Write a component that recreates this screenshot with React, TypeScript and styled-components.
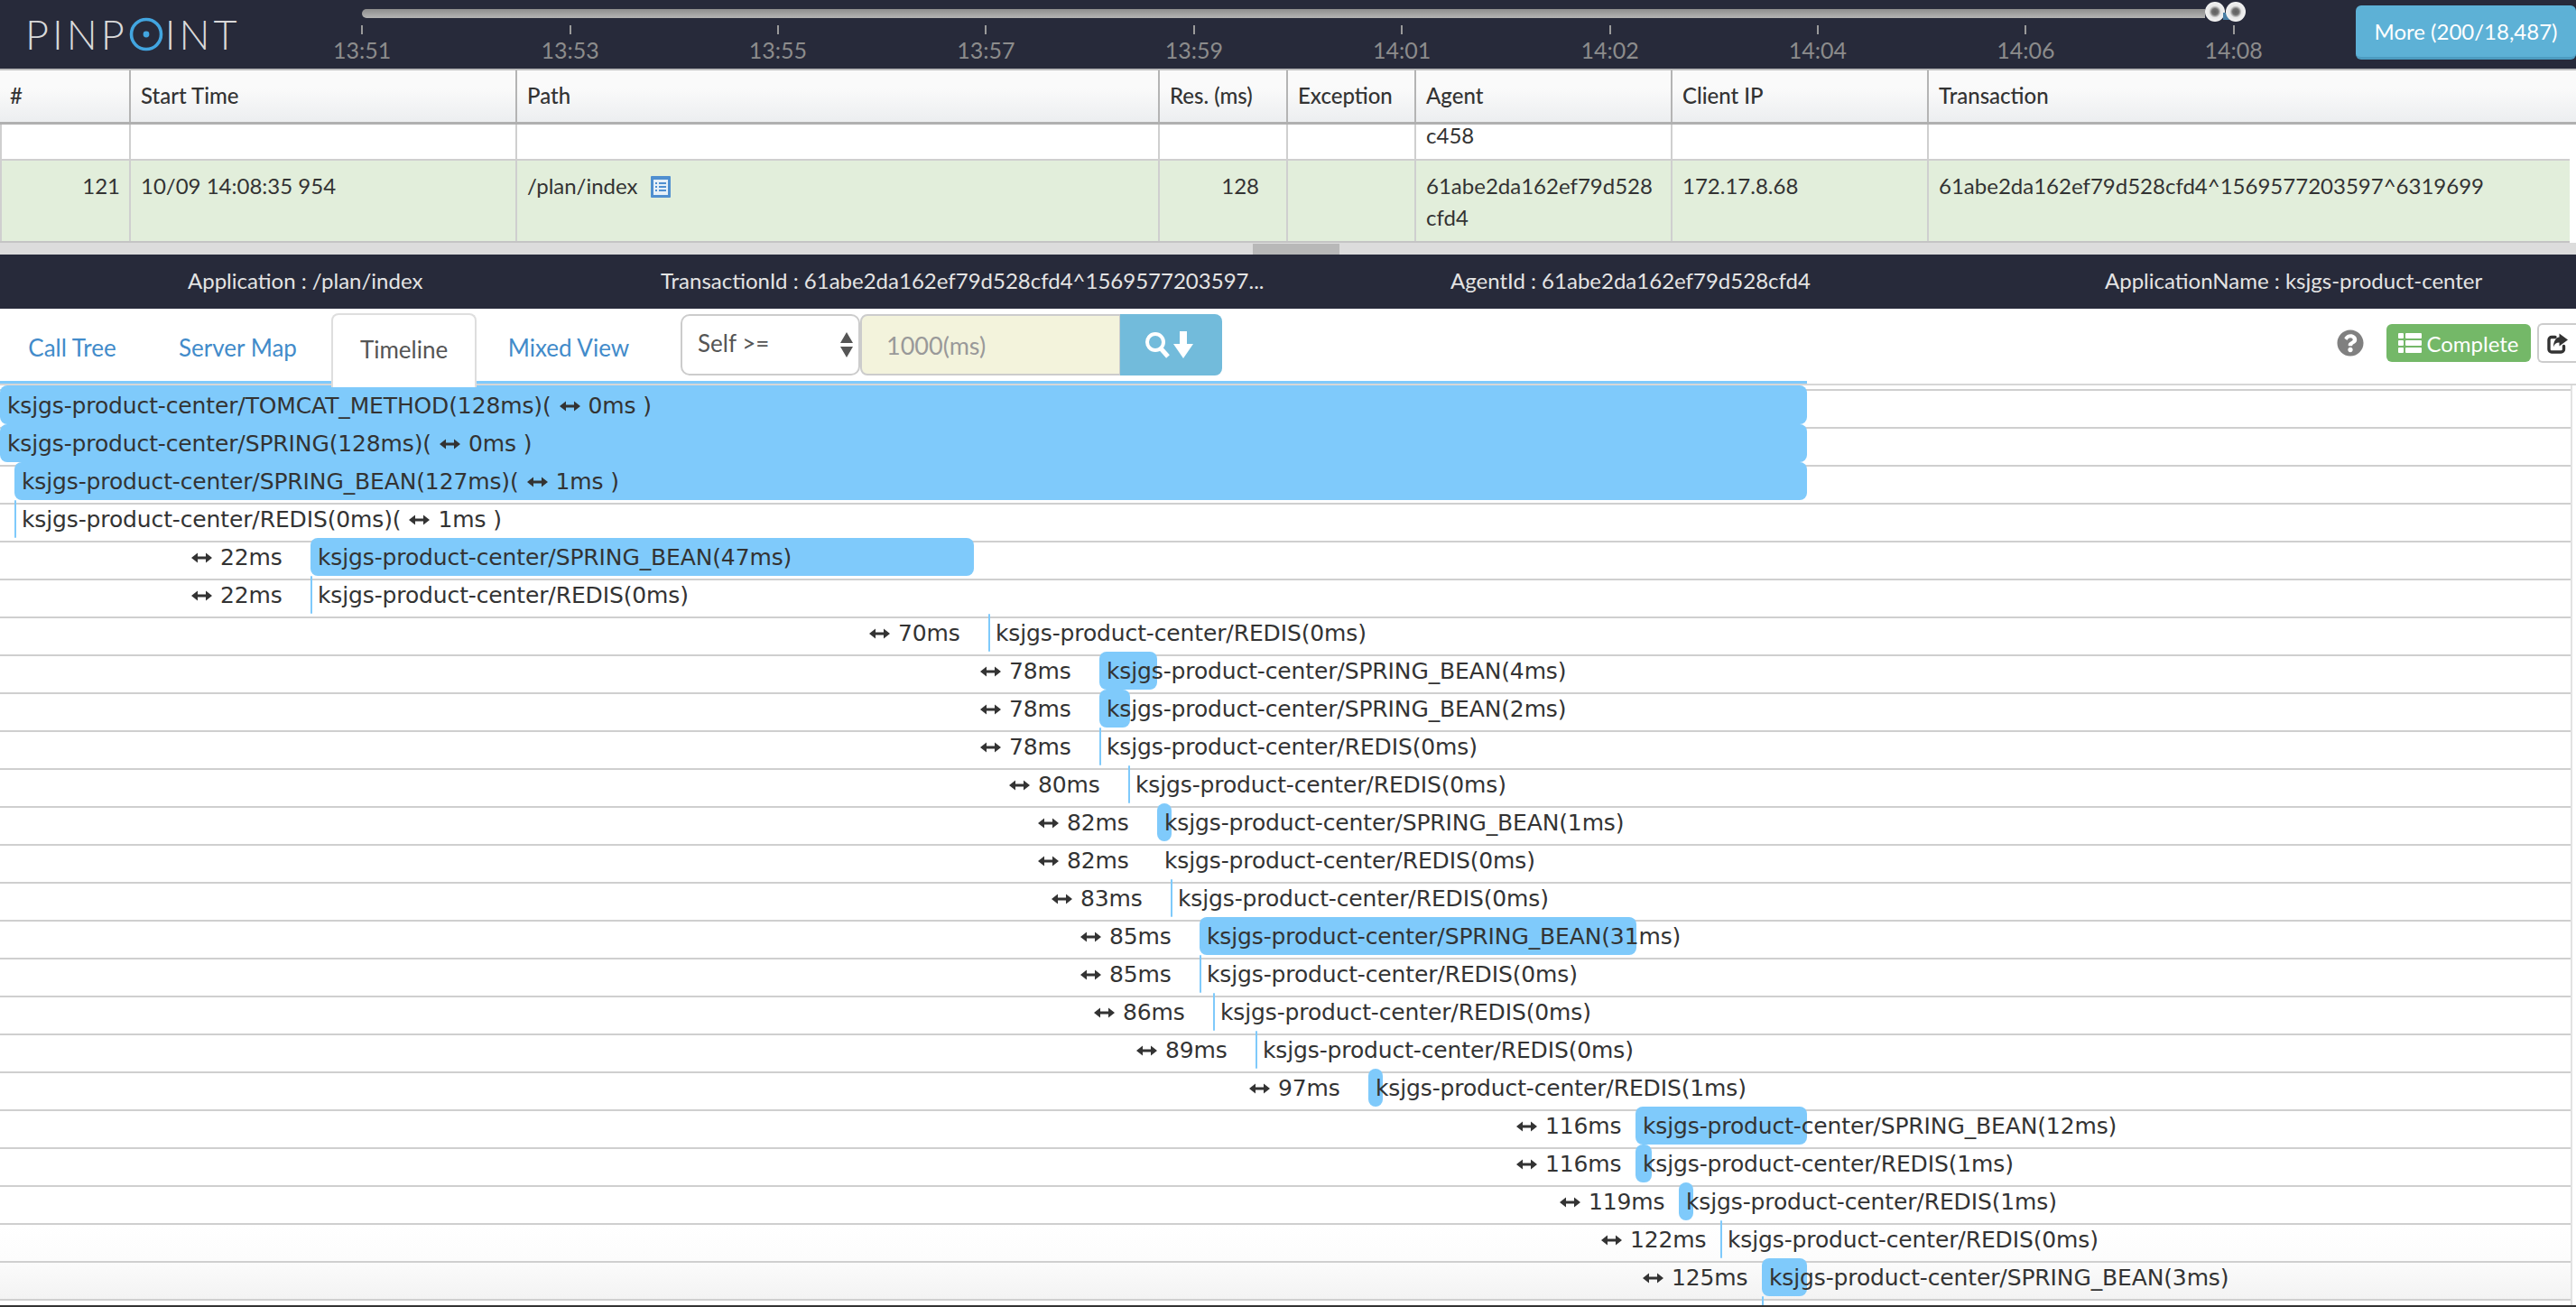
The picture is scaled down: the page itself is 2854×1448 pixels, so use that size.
import React from "react";
import styled, { createGlobalStyle } from "styled-components";
import { FaQuestionCircle } from "react-icons/fa";

const GlobalStyle = createGlobalStyle`
  html, body { margin: 0; padding: 0; background: #fff; }
  * { box-sizing: border-box; }
`;

const DARK = "#272a3a";
const BLUE = "#7fcafb";
const LINE = "#cfcfcf";

const Page = styled.div`
  width: 2854px;
  height: 1448px;
  overflow: hidden;
  display: flex;
  flex-direction: column;
  font-family: Lato, "Liberation Sans", sans-serif;
  color: #333;
`;

const TopBar = styled.header`
  height: 78px;
  flex: none;
  display: flex;
  background: ${DARK};
  border-bottom: 2px solid #bcbcbc;
`;

const Logo = styled.div`
  width: 286px;
  flex: none;
  height: 76px;
  padding-left: 28px;
  display: flex;
  align-items: center;
  font-size: 45px;
  font-weight: 300;
  color: #d9d9d9;
  letter-spacing: 4px;
  line-height: 1;
`;

const LogoDot = styled.svg`
  width: 38px;
  height: 38px;
  margin: 0 2px 0 1px;
  flex: none;
`;

const Axis = styled.div`
  width: 2324px;
  flex: none;
  padding-top: 10px;
`;

const Track = styled.div`
  position: relative;
  width: 2042px;
  height: 10px;
  margin-left: 115px;
  border-radius: 5px 0 0 5px;
  background: linear-gradient(#8d8d8d, #b4b4b4);
`;

const Handle = styled.span<{ $x: number }>`
  position: absolute;
  left: ${(p) => p.$x}px;
  top: -8px;
  width: 22px;
  height: 22px;
  border-radius: 50%;
  background: radial-gradient(circle, #5e5e5e 0, #6e6e6e 22%, #e6e6e6 42%, #f2f2f2 68%, rgba(190, 190, 190, 0.75) 100%);
`;

const HandleGap = styled.span`
  position: absolute;
  left: 2062px;
  top: 4px;
  width: 14px;
  height: 8px;
  background: #4a7fa5;
`;

const Ticks = styled.div`
  display: flex;
  margin-top: 8px;
`;

const Tick = styled.div`
  width: 230.4px;
  flex: none;
  display: flex;
  flex-direction: column;
  align-items: center;
  font-size: 25px;
  line-height: 30px;
  color: #8c8c8c;

  &::before {
    content: "";
    width: 2px;
    height: 10px;
    margin-bottom: 2px;
    background: #9a9a9a;
  }
`;

const MoreButton = styled.div`
  margin: 6px 0 0 auto;
  width: 244px;
  height: 60px;
  display: flex;
  align-items: center;
  justify-content: center;
  background: #5db1d6;
  border-bottom: 3px solid #4d9cc1;
  border-radius: 6px;
  color: #fff;
  font-size: 24px;
`;

const COLUMNS = "145px 428px 712px 142px 142px 284px 284px 1fr";

const TableHead = styled.div`
  height: 60px;
  flex: none;
  display: grid;
  grid-template-columns: ${COLUMNS};
  background: linear-gradient(#fafafa 35%, #eceef0);
  border-bottom: 3px solid #b0b0b0;
`;

const HeadCell = styled.div`
  display: flex;
  align-items: center;
  padding: 0 0 2px 11px;
  font-size: 24px;
  font-weight: 500;
  color: #333;
  border-right: 2px solid #b4b4b4;

  &:last-child {
    border-right: 0;
  }
`;

const TableRow = styled.div<{ $selected?: boolean; $height: number }>`
  height: ${(p) => p.$height}px;
  width: 2847px;
  flex: none;
  display: grid;
  grid-template-columns: ${COLUMNS};
  background: ${(p) => (p.$selected ? "#e2eedb" : "#fff")};
  border-bottom: 2px solid ${(p) => (p.$selected ? "#c4c4c4" : LINE)};
`;

const Cell = styled.div<{ $right?: number }>`
  padding: 10px ${(p) => p.$right ?? 8}px 0 11px;
  font-family: Lato, "Liberation Sans", Arial, sans-serif;
  font-size: 24px;
  line-height: 35px;
  color: #333;
  text-align: ${(p) => (p.$right ? "right" : "left")};
  border-right: 2px solid ${LINE};

  &:first-child {
    border-left: 2px solid ${LINE};
  }
  &:last-child {
    border-right: 0;
  }
`;

const TopCell = styled(Cell)`
  padding-top: 0;
  line-height: 24px;
`;

const PathIcon = styled.svg`
  width: 22px;
  height: 24px;
  margin-left: 14px;
  vertical-align: -4px;
`;

const ScrollTrack = styled.div`
  height: 13px;
  flex: none;
  background: #dcdcdc;
  display: flex;
  align-items: flex-end;
`;

const ScrollThumb = styled.div`
  width: 96px;
  height: 12px;
  margin-left: 1388px;
  background: #b8b8b8;
`;

const InfoBar = styled.div`
  height: 60px;
  flex: none;
  display: grid;
  grid-template-columns: 524px 875px 725px 1fr;
  align-items: center;
  padding: 0 0 4px 208px;
  background: ${DARK};
  color: #e4e4e4;
  font-size: 24px;
`;

const TabStrip = styled.div`
  position: relative;
  height: 85px;
  flex: none;
  display: flex;
  align-items: flex-start;
  border-bottom: 2px solid #d6d6d6;
`;

const TopEdge = styled.div`
  position: absolute;
  left: 0;
  bottom: 0;
  width: 2002px;
  height: 3px;
  background: ${BLUE};
`;

const Tab = styled.div<{ $active?: boolean; $width: number }>`
  position: relative;
  z-index: 1;
  width: ${(p) => p.$width}px;
  height: 80px;
  margin-top: 5px;
  display: flex;
  align-items: center;
  justify-content: center;
  padding-bottom: 4px;
  font-size: 26px;
  color: ${(p) => (p.$active ? "#555" : "#428bca")};
  background: #fff;
  ${(p) =>
    p.$active
      ? `border: 2px solid #dedede; border-bottom: 0; border-radius: 8px 8px 0 0; height: 82px;`
      : `background: transparent;`}
`;

const FilterGroup = styled.div`
  display: flex;
  margin: 6px 0 0 22px;
  height: 68px;
`;

const SelectBox = styled.div`
  width: 199px;
  display: flex;
  align-items: center;
  justify-content: space-between;
  padding: 0 6px 4px 17px;
  background: #fff;
  border: 2px solid #ccc;
  border-radius: 10px;
  font-size: 26px;
  color: #555;
`;

const SelectArrows = styled.svg`
  width: 14px;
  height: 28px;
  margin-top: 4px;
`;

const FilterInput = styled.div`
  width: 288px;
  display: flex;
  align-items: center;
  padding: 0 0 0 27px;
  background: #f3f3dc;
  border: 2px solid #ccc;
  border-right-width: 1px;
  border-radius: 8px 0 0 8px;
  font-size: 27px;
  color: #999;
`;

const SearchButton = styled.div`
  width: 113px;
  display: flex;
  align-items: center;
  justify-content: center;
  gap: 4px;
  padding-right: 6px;
  background: #72bbdb;
  border-radius: 0 8px 8px 0;
`;

const RightTools = styled.div`
  margin-left: auto;
  height: 44px;
  margin-top: 16px;
  display: flex;
  align-items: center;
`;

const HelpIcon = styled(FaQuestionCircle)`
  width: 30px;
  height: 30px;
  color: #808080;
  margin-right: 25px;
`;

const CompleteBadge = styled.div`
  width: 160px;
  height: 42px;
  display: flex;
  align-items: center;
  justify-content: center;
  gap: 5px;
  border-radius: 6px;
  background: #74b868;
  color: #fff;
  font-size: 24px;
`;

const ShareButton = styled.div`
  width: 43px;
  height: 44px;
  margin-left: 7px;
  padding-left: 9px;
  display: flex;
  align-items: center;
  background: #fff;
  border: 2px solid #ccc;
  border-right: 0;
  border-radius: 6px 0 0 6px;
`;

const Lanes = styled.div`
  position: relative;
  flex: 1;
  width: 2850px;
  padding-top: 4px;
  overflow: hidden;
  border-right: 2px solid #e2e2e2;
`;

const Bar = styled.div`
  position: absolute;
  top: -5px;
  height: 42px;
  border-radius: 8px;
  background: ${BLUE};
`;

const Lane = styled.div`
  position: relative;
  height: 42px;
  display: flex;
  align-items: center;
  padding-bottom: 8px;
  border-top: 2px solid ${LINE};
  font-family: "DejaVu Sans", sans-serif;
  font-size: 25px;
  letter-spacing: -0.13px;
  white-space: nowrap;
  color: #333;

  &:first-child ${Bar} {
    top: -6px;
    height: 43px;
  }
  &:nth-last-child(2) {
    background: linear-gradient(#fbfbfb, #f3f3f3);
  }
  &:nth-last-child(3) {
    background: linear-gradient(#fff, #fcfcfc);
  }
`;

const Lead = styled.div`
  flex: none;
  display: flex;
  justify-content: flex-end;
  position: relative;
`;

const GapRow = styled.div`
  width: 132px;
  flex: none;
  display: flex;
  align-items: center;
  gap: 9px;
  position: relative;
`;

const Label = styled.span`
  position: relative;
  margin-left: 8px;
  display: inline-flex;
  align-items: center;
`;

const Arrow = styled.svg`
  width: 23px;
  height: 12px;
  flex: none;
  margin-top: 2px;
`;

const InlineArrow = styled(Arrow)`
  margin: 2px 9px 0 9px;
`;

const BottomEdge = styled.div`
  height: 2px;
  flex: none;
  background: #333;
`;

const LongArrow = ({ inline }: { inline?: boolean }) => {
  const Comp = inline ? InlineArrow : Arrow;
  return (
    <Comp viewBox="0 0 23 12">
      <path d="M0 6 L7 0.5 V4.5 H16 V0.5 L23 6 L16 11.5 V7.5 H7 V11.5 Z" fill="#333" />
    </Comp>
  );
};

const ListIcon = () => (
  <svg width="26" height="24" viewBox="0 0 26 24" fill="#fff">
    <rect x="0" y="1" width="6" height="6" rx="1" />
    <rect x="8" y="1" width="18" height="6" rx="1" />
    <rect x="0" y="9" width="6" height="6" rx="1" />
    <rect x="8" y="9" width="18" height="6" rx="1" />
    <rect x="0" y="17" width="6" height="6" rx="1" />
    <rect x="8" y="17" width="18" height="6" rx="1" />
  </svg>
);

const ShareIcon = () => (
  <svg width="23" height="23" viewBox="0 0 23 23">
    <path
      d="M18.5 14.5v3.5a3 3 0 0 1-3 3H5a3 3 0 0 1-3-3V7.5a3 3 0 0 1 3-3h4"
      fill="none"
      stroke="#333"
      strokeWidth="3.4"
      strokeLinecap="round"
    />
    <path d="M13.5 0.5 L23 7.5 L13.5 14.5 V10.5 C10 10.5 8 12 7 15.5 C7 9.5 9.5 5 13.5 4.5 Z" fill="#333" />
  </svg>
);

type Span = {
  left: number;
  width: number;
  text: string;
  gap?: string;
  self?: string;
  noLine?: boolean;
};

const P = "ksjgs-product-center";
const SPANS: Span[] = [
  { left: 0, width: 2002, text: `${P}/TOMCAT_METHOD(128ms)`, self: "0ms" },
  { left: 0, width: 2002, text: `${P}/SPRING(128ms)`, self: "0ms" },
  { left: 16, width: 1986, text: `${P}/SPRING_BEAN(127ms)`, self: "1ms" },
  { left: 16, width: 2, text: `${P}/REDIS(0ms)`, self: "1ms" },
  { left: 344, width: 735, text: `${P}/SPRING_BEAN(47ms)`, gap: "22ms" },
  { left: 344, width: 2, text: `${P}/REDIS(0ms)`, gap: "22ms" },
  { left: 1095, width: 2, text: `${P}/REDIS(0ms)`, gap: "70ms" },
  { left: 1218, width: 64, text: `${P}/SPRING_BEAN(4ms)`, gap: "78ms" },
  { left: 1218, width: 34, text: `${P}/SPRING_BEAN(2ms)`, gap: "78ms" },
  { left: 1218, width: 2, text: `${P}/REDIS(0ms)`, gap: "78ms" },
  { left: 1250, width: 2, text: `${P}/REDIS(0ms)`, gap: "80ms" },
  { left: 1282, width: 16, text: `${P}/SPRING_BEAN(1ms)`, gap: "82ms" },
  { left: 1282, width: 2, text: `${P}/REDIS(0ms)`, gap: "82ms", noLine: true },
  { left: 1297, width: 2, text: `${P}/REDIS(0ms)`, gap: "83ms" },
  { left: 1329, width: 484, text: `${P}/SPRING_BEAN(31ms)`, gap: "85ms" },
  { left: 1329, width: 2, text: `${P}/REDIS(0ms)`, gap: "85ms" },
  { left: 1344, width: 2, text: `${P}/REDIS(0ms)`, gap: "86ms" },
  { left: 1391, width: 2, text: `${P}/REDIS(0ms)`, gap: "89ms" },
  { left: 1516, width: 16, text: `${P}/REDIS(1ms)`, gap: "97ms" },
  { left: 1812, width: 190, text: `${P}/SPRING_BEAN(12ms)`, gap: "116ms" },
  { left: 1812, width: 18, text: `${P}/REDIS(1ms)`, gap: "116ms" },
  { left: 1860, width: 16, text: `${P}/REDIS(1ms)`, gap: "119ms" },
  { left: 1906, width: 2, text: `${P}/REDIS(0ms)`, gap: "122ms" },
  { left: 1952, width: 50, text: `${P}/SPRING_BEAN(3ms)`, gap: "125ms" },
  { left: 1952, width: 2, text: "", gap: "" },
];

const TIMES = ["13:51", "13:53", "13:55", "13:57", "13:59", "14:01", "14:02", "14:04", "14:06", "14:08"];
const HEADS = ["#", "Start Time", "Path", "Res. (ms)", "Exception", "Agent", "Client IP", "Transaction"];

export default function App() {
  return (
    <Page>
      <GlobalStyle />
      <TopBar>
        <Logo>
          PINP
          <LogoDot viewBox="0 0 38 38">
            <circle cx="19" cy="19" r="16.5" fill="none" stroke="#42a5e0" strokeWidth="3.6" />
            <circle cx="19" cy="19" r="3.4" fill="#42a5e0" />
          </LogoDot>
          INT
        </Logo>
        <Axis>
          <Track>
            <Handle $x={2042} />
            <HandleGap />
            <Handle $x={2065} />
          </Track>
          <Ticks>
            {TIMES.map((t) => (
              <Tick key={t}>{t}</Tick>
            ))}
          </Ticks>
        </Axis>
        <MoreButton>More (200/18,487)</MoreButton>
      </TopBar>

      <TableHead>
        {HEADS.map((h) => (
          <HeadCell key={h}>{h}</HeadCell>
        ))}
      </TableHead>
      <TableRow $height={40}>
        <Cell />
        <Cell />
        <Cell />
        <Cell />
        <Cell />
        <TopCell>c458</TopCell>
        <Cell />
        <Cell />
      </TableRow>
      <TableRow $selected $height={91}>
        <Cell $right={10}>121</Cell>
        <Cell>10/09 14:08:35 954</Cell>
        <Cell>
          /plan/index
          <PathIcon viewBox="0 0 22 24">
            <rect width="22" height="24" rx="1" fill="#4f8fd0" />
            <rect x="3" y="4" width="16" height="17" fill="#e6f0f8" />
            <path d="M5 7h2v2H5zM9 7h8v2H9zM5 11h2v2H5zM9 11h8v2H9zM5 15h2v2H5zM9 15h8v2H9z" fill="#4f8fd0" />
          </PathIcon>
        </Cell>
        <Cell $right={30}>128</Cell>
        <Cell />
        <Cell>
          61abe2da162ef79d528
          <br />
          cfd4
        </Cell>
        <Cell>172.17.8.68</Cell>
        <Cell>61abe2da162ef79d528cfd4^1569577203597^6319699</Cell>
      </TableRow>
      <ScrollTrack>
        <ScrollThumb />
      </ScrollTrack>

      <InfoBar>
        <div>Application : /plan/index</div>
        <div>TransactionId : 61abe2da162ef79d528cfd4^1569577203597...</div>
        <div>AgentId : 61abe2da162ef79d528cfd4</div>
        <div>ApplicationName : ksjgs-product-center</div>
      </InfoBar>

      <TabStrip>
        <TopEdge />
        <Tab $width={160}>Call Tree</Tab>
        <Tab $width={207}>Server Map</Tab>
        <Tab $active $width={161}>Timeline</Tab>
        <Tab $width={204}>Mixed View</Tab>
        <FilterGroup>
          <SelectBox>
            Self &gt;=
            <SelectArrows viewBox="0 0 14 28">
              <path d="M7 0 L14 12 H0 Z M7 28 L14 16 H0 Z" fill="#555" />
            </SelectArrows>
          </SelectBox>
          <FilterInput>1000(ms)</FilterInput>
          <SearchButton>
            <svg width="28" height="30" viewBox="0 0 28 30" fill="none" stroke="#fff">
              <circle cx="12" cy="12" r="9" strokeWidth="4" />
              <path d="M18 19 L26 28" strokeWidth="5" />
            </svg>
            <svg width="22" height="30" viewBox="0 0 22 30" fill="#fff">
              <path d="M7 0 H15 V14 H22 L11 30 L0 14 H7 Z" />
            </svg>
          </SearchButton>
        </FilterGroup>
        <RightTools>
          <HelpIcon />
          <CompleteBadge>
            <ListIcon />
            Complete
          </CompleteBadge>
          <ShareButton>
            <ShareIcon />
          </ShareButton>
        </RightTools>
      </TabStrip>

      <Lanes>
        {SPANS.map((s, i) => (
          <Lane key={i}>
            {!s.noLine && <Bar style={{ left: s.left, width: s.width }} />}
            <Lead style={{ width: s.left }}>
              {s.gap && (
                <GapRow>
                  <LongArrow />
                  <span>{s.gap}</span>
                </GapRow>
              )}
            </Lead>
            <Label>
              {s.text}
              {s.self && (
                <>
                  (<LongArrow inline />
                  {s.self} )
                </>
              )}
            </Label>
          </Lane>
        ))}
      </Lanes>
      <BottomEdge />
    </Page>
  );
}
